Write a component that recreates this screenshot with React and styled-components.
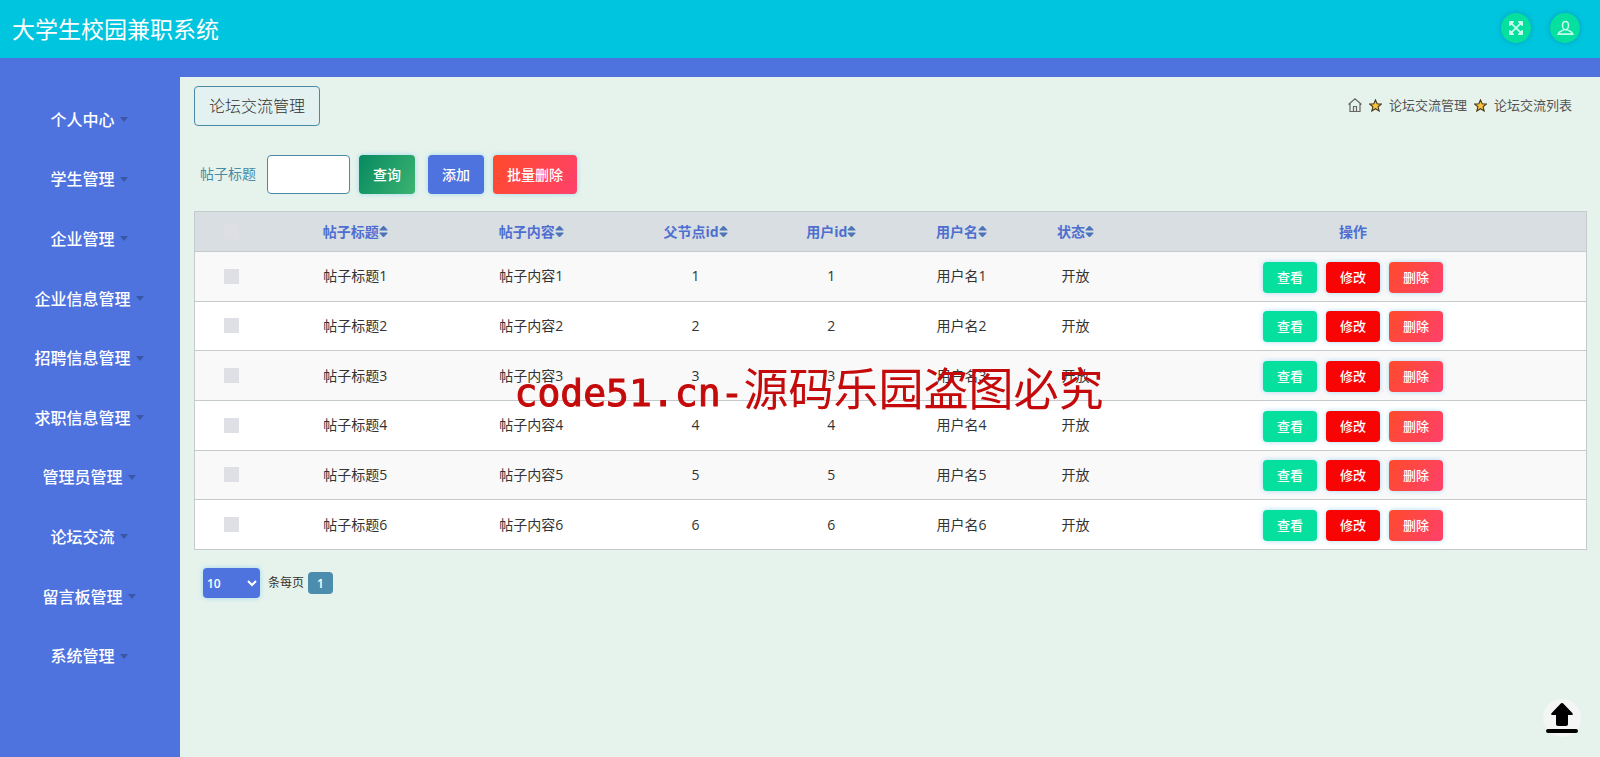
import React, { useState } from 'react';
import styled, { createGlobalStyle } from 'styled-components';
import { FaExpandArrowsAlt, FaSort } from 'react-icons/fa';

const menus = [
  '个人中心',
  '学生管理',
  '企业管理',
  '企业信息管理',
  '招聘信息管理',
  '求职信息管理',
  '管理员管理',
  '论坛交流',
  '留言板管理',
  '系统管理',
];

const columns = [
  { title: '帖子标题', width: '12.5%' },
  { title: '帖子内容', width: '12.8%' },
  { title: '父节点id', width: '10.8%' },
  { title: '用户id', width: '8.7%' },
  { title: '用户名', width: '10%' },
  { title: '状态', width: '6.4%' },
];

const posts = [1, 2, 3, 4, 5, 6].map((n) => ({
  id: n,
  cells: [`帖子标题${n}`, `帖子内容${n}`, n, n, `用户名${n}`, '开放'],
}));

function Star() {
  return (
    <StarIcon viewBox="0 0 12 12" aria-hidden="true">
      <path d="M6 .8 7.5 4.4 11.4 4.7 8.4 7.2 9.4 11.1 6 9 2.6 11.1 3.6 7.2.6 4.7 4.5 4.4Z" />
    </StarIcon>
  );
}

function App() {
  const [selected, setSelected] = useState([]);
  const [title, setTitle] = useState('');

  const toggle = (id) => {
    setSelected(selected.includes(id) ? selected.filter((s) => s !== id) : [...selected, id]);
  };

  return (
    <>
      <GlobalStyle />
      <Page>
        <Header>
          <Brand>大学生校园兼职系统</Brand>
          <HeaderActions>
            <RoundButton aria-label="全屏">
              <FaExpandArrowsAlt size={16} />
            </RoundButton>
            <RoundButton aria-label="用户">
              <svg width="17" height="16" viewBox="0 0 17 16" fill="none" stroke="currentColor" strokeWidth="1.6">
                <path d="M8.500 1.500C6.300 1.500 5.500 3 5.500 5.200s1.200 4.600 3 4.600 3-2.400 3-4.600-.8-3.700-3-3.700ZM6.800 9.500c-.2 1.600-4.900 1.200-5.600 4.600h14.600c-.7-3.400-5.400-3-5.600-4.600" />
              </svg>
            </RoundButton>
          </HeaderActions>
        </Header>
        <Body>
          <Sidebar>
            <MenuList>
              {menus.map((menu) => (
                <li key={menu}>
                  <MenuLink href="#">
                    {menu}
                    <Caret />
                  </MenuLink>
                </li>
              ))}
            </MenuList>
          </Sidebar>
          <Main>
            <TitleBar>
              <PageTitle>论坛交流管理</PageTitle>
              <Breadcrumb aria-label="位置">
                <HomeLink href="#" aria-label="首页">
                  <svg width="14" height="14" viewBox="0 0 14 14" fill="none" stroke="currentColor" strokeWidth="1.2">
                    <path d="M.5 6.500 7 .8l6.500 5.700M2 5.500v8h10v-8M5.500 13.500V8.500h3v5" />
                  </svg>
                </HomeLink>
                <Star />
                <span>论坛交流管理</span>
                <Star />
                <span>论坛交流列表</span>
              </Breadcrumb>
            </TitleBar>
            <SearchForm onSubmit={(e) => e.preventDefault()}>
              <SearchLabel htmlFor="title">帖子标题</SearchLabel>
              <SearchInput id="title" value={title} onChange={(e) => setTitle(e.target.value)} />
              <SearchButton type="submit">查询</SearchButton>
              <AddButton type="button">添加</AddButton>
              <BatchDeleteButton type="button">批量删除</BatchDeleteButton>
            </SearchForm>
            <Table>
              <thead>
                <tr>
                  <Th $width="5.3%">
                    <Checkbox
                      type="checkbox"
                      aria-label="全选"
                      $faint
                      checked={selected.length === posts.length}
                      onChange={() => setSelected(selected.length === posts.length ? [] : posts.map((p) => p.id))}
                    />
                  </Th>
                  {columns.map((column) => (
                    <Th key={column.title} $width={column.width}>
                      <SortLabel>
                        {column.title}
                        <FaSort size={15} />
                      </SortLabel>
                    </Th>
                  ))}
                  <Th>操作</Th>
                </tr>
              </thead>
              <tbody>
                {posts.map((post) => (
                  <Row key={post.id}>
                    <Td>
                      <Checkbox
                        type="checkbox"
                        aria-label={`选择${post.id}`}
                        checked={selected.includes(post.id)}
                        onChange={() => toggle(post.id)}
                      />
                    </Td>
                    {post.cells.map((cell, i) => (
                      <Td key={columns[i].title}>{cell}</Td>
                    ))}
                    <Td>
                      <RowActions>
                        <ViewButton>查看</ViewButton>
                        <EditButton>修改</EditButton>
                        <DeleteButton>删除</DeleteButton>
                      </RowActions>
                    </Td>
                  </Row>
                ))}
              </tbody>
            </Table>
            <Pagination>
              <PageSize id="size" defaultValue="10">
                <option>10</option>
                <option>25</option>
                <option>50</option>
              </PageSize>
              <label htmlFor="size">条每页</label>
              <PageButton>1</PageButton>
            </Pagination>
          </Main>
        </Body>
        <Watermark>
          <WatermarkSite>code51.cn-</WatermarkSite>源码乐园盗图必究
        </Watermark>
        <BackToTop aria-label="返回顶部" onClick={() => window.scrollTo(0, 0)}>
          <svg width="34" height="32" viewBox="0 0 34 32" fill="currentColor">
            <path d="M17 1c.7 0 1.200.4 1.700.9l8.600 9c.9.9.5 2.100-.8 2.100H23v9c0 1.300-.7 2-2 2h-8c-1.300 0-2-.7-2-2v-9H7.500c-1.300 0-1.700-1.200-.8-2.100l8.600-9c.5-.5 1-.9 1.700-.9Z" />
            <rect x="1" y="27" width="32" height="4" rx="2" />
          </svg>
        </BackToTop>
      </Page>
    </>
  );
}

const GlobalStyle = createGlobalStyle`
  * {
    box-sizing: border-box;
  }

  body {
    margin: 0;
    font-family: "Open Sans", "Noto Sans CJK SC", sans-serif;
    font-size: 14px;
    line-height: 20px;
    color: #333;
  }

  button, input, select {
    font-family: inherit;
  }
`;

const Page = styled.div`
  min-height: 100vh;
  display: flex;
  flex-direction: column;
  background-color: #4e73df;
`;

const Header = styled.header`
  height: 58px;
  display: flex;
  align-items: center;
  justify-content: space-between;
  padding: 0 20px 0 12px;
  background-color: #00c5de;
`;

const Brand = styled.h1`
  margin: 0;
  font-size: 23px;
  font-weight: 400;
  line-height: 32px;
  color: #fff;
`;

const HeaderActions = styled.div`
  display: flex;
  gap: 19px;
  padding-bottom: 2px;
`;

const RoundButton = styled.button`
  width: 30px;
  height: 30px;
  padding: 0;
  border: none;
  border-radius: 50%;
  display: flex;
  align-items: center;
  justify-content: center;
  color: #c8fbea;
  background-color: #05e09f;
  box-shadow: 0 0 5px rgba(0, 100, 130, 0.4);
`;

const Body = styled.div`
  flex: 1;
  display: grid;
  grid-template-columns: 180px 1fr;
`;

const Sidebar = styled.nav`
  padding-top: 32px;
`;

const MenuList = styled.ul`
  height: 596px;
  margin: 0;
  padding: 0;
  list-style: none;
  display: grid;
  grid-auto-rows: 1fr;
`;

const MenuLink = styled.a`
  height: 100%;
  display: flex;
  align-items: center;
  justify-content: center;
  gap: 5px;
  padding-right: 2px;
  font-size: 16px;
  font-weight: 500;
  color: #fff;
  text-decoration: none;
`;

const Caret = styled.span`
  border: 4px solid transparent;
  border-top: 5px solid #3a57a5;
  border-bottom: none;
`;

const Main = styled.main`
  margin-top: 19px;
  padding: 9px 13px 9px 14px;
  background-color: #e6f3ec;
`;

const TitleBar = styled.div`
  display: flex;
  justify-content: space-between;
`;

const PageTitle = styled.h2`
  margin: 0;
  padding: 9px 14px;
  border: 1px solid #4a8aa5;
  border-radius: 4px;
  font-size: 16px;
  font-weight: 300;
  color: #333;
  background-color: #e3f2f0;
`;

const Breadcrumb = styled.nav`
  display: flex;
  align-items: center;
  gap: 7px;
  height: 37px;
  padding-right: 15px;
  font-size: 13px;
  color: #555;
`;

const HomeLink = styled.a`
  display: flex;
  color: #666;
`;

const StarIcon = styled.svg`
  width: 13px;
  height: 13px;
  margin-top: 2px;
  fill: #fcc33c;
  stroke: #43371c;
`;

const SearchForm = styled.form`
  display: flex;
  align-items: center;
  margin-top: 29px;
  padding-left: 6px;
`;

const SearchLabel = styled.label`
  margin-right: 11px;
  padding-bottom: 2px;
  color: #4a8aa5;
`;

const SearchInput = styled.input`
  width: 83px;
  height: 39px;
  margin-right: 9px;
  padding: 0 10px;
  border: 1px solid #4a8aa5;
  border-radius: 4px;
  background-color: #fff;
`;

const Button = styled.button`
  height: 39px;
  padding: 0 14px 2px;
  border: none;
  border-radius: 4px;
  font-size: 14px;
  font-weight: 500;
  white-space: nowrap;
  color: #fff;
  box-shadow: 0 0 5px rgba(110, 200, 240, 0.6);
`;

const SearchButton = styled(Button)`
  margin-right: 13px;
  background: linear-gradient(120deg, #078a60, #3cb371);
`;

const AddButton = styled(Button)`
  margin-right: 9px;
  background-color: #4e73df;
`;

const BatchDeleteButton = styled(Button)`
  background: linear-gradient(120deg, #ff4b2b, #ff416c);
`;

const Table = styled.table`
  width: 100%;
  height: 339px;
  margin-top: 17px;
  table-layout: fixed;
  border-collapse: collapse;
  border: 1px solid #c5cacd;
  text-align: center;
`;

const Th = styled.th`
  width: ${({ $width }) => $width || 'auto'};
  height: 40px;
  padding: 0;
  border-bottom: 1px solid #c5cacd;
  font-weight: 700;
  color: #4e6fd0;
  background-color: #d9dee2;
`;

const SortLabel = styled.span`
  display: inline-flex;
  align-items: center;

  svg {
    width: 9px;
    color: #4e73b8;
  }
`;

const Row = styled.tr`
  background-color: #fff;

  &:nth-child(odd) {
    background-color: #f9f9f9;
  }
`;

const Td = styled.td`
  padding: 0;
  border-bottom: 1px solid #c5cacd;
`;

const Checkbox = styled.input`
  appearance: none;
  display: block;
  width: 15px;
  height: 15px;
  margin: 0 auto;
  background-color: ${({ $faint }) => ($faint ? '#dddfe4' : '#dfe0e6')};

  &:checked {
    background-color: #4e73df;
  }
`;

const RowActions = styled.div`
  display: flex;
  justify-content: center;
  gap: 9px;
  padding-top: 2px;
`;

const RowButton = styled(Button)`
  height: 31px;
  font-size: 13px;
`;

const ViewButton = styled(RowButton)`
  background-color: #05e09f;
`;

const EditButton = styled(RowButton)`
  background-color: #f90404;
`;

const DeleteButton = styled(RowButton)`
  background: linear-gradient(120deg, #ff4b2b, #ff416c);
`;

const Pagination = styled.div`
  display: flex;
  align-items: center;
  margin-top: 18px;
  padding-left: 9px;
  font-size: 12px;
`;

const PageSize = styled.select`
  width: 57px;
  height: 30px;
  margin-right: 8px;
  padding: 0;
  border: none;
  border-radius: 4px;
  font-size: 12px;
  font-weight: 600;
  color: #fff;
  background-color: #4e73df;
  box-shadow: 0 0 5px rgba(110, 200, 240, 0.6);
`;

const PageButton = styled.button`
  width: 25px;
  height: 22px;
  margin-left: 4px;
  padding: 0;
  border: none;
  border-radius: 4px;
  font-size: 12px;
  font-weight: 600;
  color: #fff;
  background-color: #4c8dae;
`;

const Watermark = styled.div`
  position: fixed;
  top: 50%;
  left: 50%;
  transform: translate(-50%, -50%);
  padding: 23px 0 0 18px;
  font-size: 45px;
  line-height: 60px;
  white-space: nowrap;
  color: #c40a0a;
  pointer-events: none;
`;

const WatermarkSite = styled.span`
  font-family: "DejaVu Sans Mono", monospace;
  font-size: 38px;
  -webkit-text-stroke: 1px #c40a0a;
`;

const BackToTop = styled.button`
  position: fixed;
  right: 19px;
  bottom: 20px;
  width: 38px;
  height: 38px;
  padding: 0;
  border: none;
  border-radius: 50%;
  display: flex;
  align-items: center;
  justify-content: center;
  color: #000;
  background-color: #f4f6f5;
`;

export default App;
